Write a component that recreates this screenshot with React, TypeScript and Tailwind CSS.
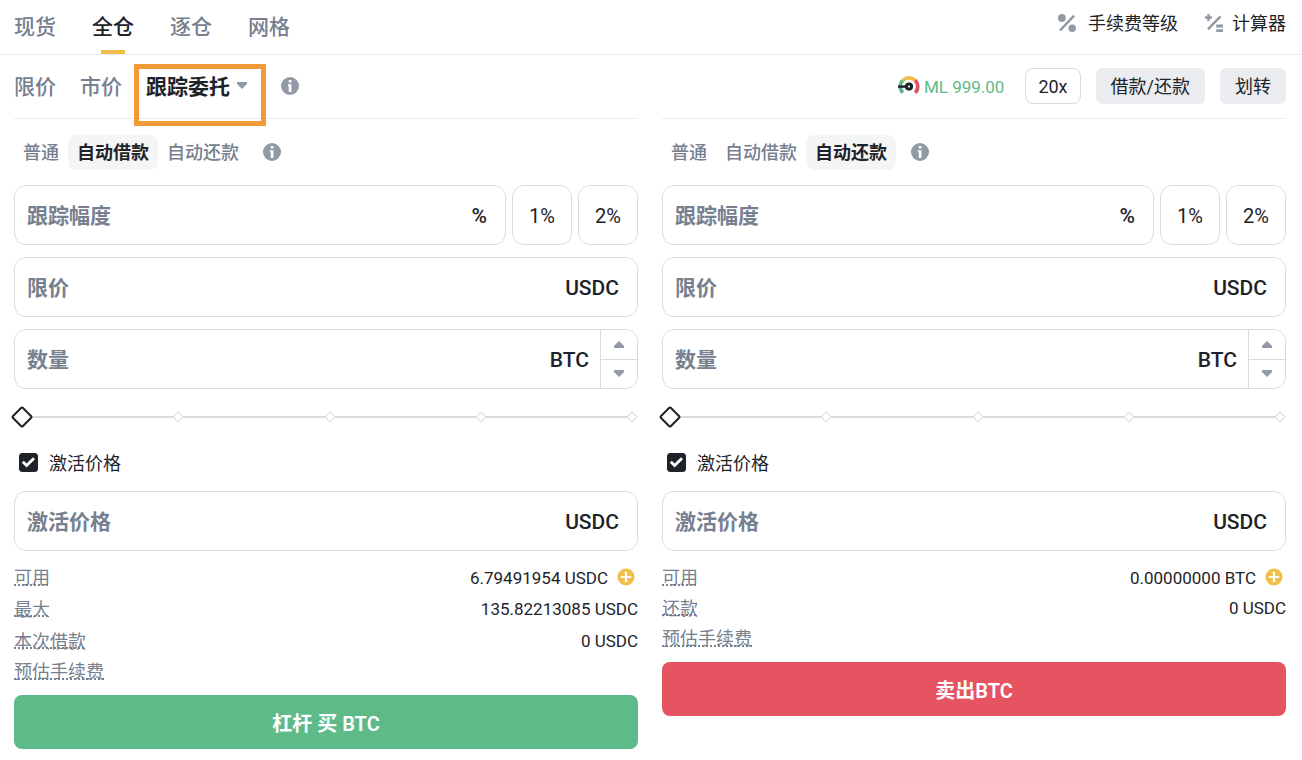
import { useState } from "react";

type Row = { label: string; value?: string; add?: boolean; size: string };

const TABS = ["现货", "全仓", "逐仓", "网格"];
const MODES = ["普通", "自动借款", "自动还款"];

const BUY_ROWS: Row[] = [
  { label: "可用", value: "6.79491954 USDC", add: true, size: "h-[30px]" },
  { label: "最大", value: "135.82213085 USDC", size: "h-[33px]" },
  { label: "本次借款", value: "0 USDC", size: "h-[31px]" },
  { label: "预估手续费", size: "h-[30px]" },
];

const SELL_ROWS: Row[] = [
  { label: "可用", value: "0.00000000 BTC", add: true, size: "h-[30px]" },
  { label: "还款", value: "0 USDC", size: "h-[31px]" },
  { label: "预估手续费", size: "h-[30px]" },
];

const BOX = "h-[60px] rounded-xl border border-[#d8dce1] bg-white";

function InfoIcon() {
  return (
    <svg className="size-[18px] shrink-0" viewBox="0 0 18 18">
      <circle cx="9" cy="9" r="9" fill="#929aa5" />
      <path d="M7.800 3h2.600v2.600H7.800zM7 7.200h3.400V15H7.800V9.200H7z" fill="#fff" />
    </svg>
  );
}

function FeeIcon() {
  return (
    <svg className="size-[18px] shrink-0" viewBox="0 0 18 18" fill="#929aa5">
      <circle cx="3.900" cy="3.900" r="3.900" />
      <circle cx="14.200" cy="14.200" r="3.800" />
      <path d="M15.200 .8l1.800 1.800L3 17.200l-1.800-1.800z" />
    </svg>
  );
}

function CalcIcon() {
  return (
    <svg className="size-[18px] shrink-0" viewBox="0 0 18 18" fill="#929aa5">
      <path d="M2.300 0h2.400v2.300H7v2.400H4.700V7H2.300V4.700H0V2.300h2.300z" />
      <path d="M14.600 1.400l1.800 1.800L3.800 16.200 2 14.400zM11.200 10.600H18v2.800h-6.800zM11.200 15.200H18V18h-6.800z" />
    </svg>
  );
}

function GaugeIcon() {
  return (
    <svg className="h-5 w-[22px] shrink-0" viewBox="0 0 22 20" fill="none" strokeWidth="3.600">
      <path d="M4.800 16.700A8.700 8.700 0 0 1 5 4.300" stroke="#5eba89" />
      <path d="M5 4.300a8.700 8.700 0 0 1 12 0" stroke="#f0bf48" />
      <path d="M17 4.300a8.700 8.700 0 0 1 .2 12.400" stroke="#e0505f" />
      <path d="M0 10.600h8" stroke="#1e2329" strokeWidth="2.400" />
      <circle cx="11" cy="10.600" r="2.600" fill="#fff" stroke="#1e2329" strokeWidth="3" />
    </svg>
  );
}

function Caret({ up }: { up?: boolean }) {
  return (
    <svg className="h-[7px] w-[10px]" viewBox="0 0 10 7" fill="#929aa5">
      <path d={up ? "M5 0l5 5v2H0V5z" : "M5 7l5-5V0H0v2z"} />
    </svg>
  );
}

function Field({ label, unit }: { label: string; unit: string }) {
  return (
    <label className={`${BOX} flex min-w-0 flex-1 items-center pt-[3px] pr-[18px] pl-3 text-[21px] font-medium`}>
      <input
        aria-label={label}
        placeholder={label}
        className="min-w-0 flex-1 outline-none placeholder:font-semibold placeholder:text-[#76808f] placeholder:opacity-100"
      />
      <span>{unit}</span>
    </label>
  );
}

function AmountField() {
  return (
    <div className={`${BOX} flex overflow-hidden`}>
      <label className="flex min-w-0 flex-1 items-center pt-[3px] pr-[11px] pl-3 text-[21px] font-medium">
        <input
          aria-label="数量"
          placeholder="数量"
          className="min-w-0 flex-1 outline-none placeholder:font-semibold placeholder:text-[#76808f] placeholder:opacity-100"
        />
        <span>BTC</span>
      </label>
      <div className="flex w-[37px] flex-col divide-y divide-[#d8dce1] border-l border-[#d8dce1]">
        <button type="button" aria-label="+" className="flex flex-1 items-center justify-center">
          <Caret up />
        </button>
        <button type="button" aria-label="-" className="flex flex-1 items-center justify-center">
          <Caret />
        </button>
      </div>
    </div>
  );
}

function AmountSlider() {
  return (
    <div className="relative mt-[17px] flex h-[22px] items-center">
      <div className="mr-1.5 h-0.5 flex-1 bg-[#d8dce1]" />
      <div className="absolute inset-y-0 right-0.5 left-[9px] flex items-center justify-between">
        {[0, 25, 50, 75, 100].map((n) => (
          <span key={n} className={n === 0 ? "size-2" : "size-2 rotate-45 rounded-[1px] border border-[#d8dce1] bg-white"} />
        ))}
      </div>
      <input
        type="range"
        aria-label="%"
        defaultValue={0}
        className="absolute inset-0 w-full appearance-none bg-transparent [&::-webkit-slider-thumb]:size-4 [&::-webkit-slider-thumb]:rotate-45 [&::-webkit-slider-thumb]:appearance-none [&::-webkit-slider-thumb]:rounded-[2px] [&::-webkit-slider-thumb]:border-2 [&::-webkit-slider-thumb]:border-[#1e2329] [&::-webkit-slider-thumb]:bg-white"
      />
    </div>
  );
}

function OrderForm({ side, initialMode, rows }: { side: "buy" | "sell"; initialMode: string; rows: Row[] }) {
  const [mode, setMode] = useState(initialMode);
  const [trigger, setTrigger] = useState(true);

  return (
    <form className="flex min-w-0 flex-1 flex-col border-t border-[#eaecef] pt-4" onSubmit={(e) => e.preventDefault()}>
      <div className="flex items-center">
        {MODES.map((m) => (
          <button
            key={m}
            type="button"
            onClick={() => setMode(m)}
            className={`h-[35px] rounded-lg px-[9px] text-lg ${m === mode ? "bg-[#f4f6f6] font-semibold" : "font-medium text-[#76808f]"}`}
          >
            {m}
          </button>
        ))}
        <span className="ml-[15px] pb-px">
          <InfoIcon />
        </span>
      </div>

      <div className="mt-[15px] flex flex-col gap-3">
        <div className="flex gap-1.5">
          <Field label="跟踪幅度" unit="%" />
          <button type="button" className={`${BOX} w-[60px] pt-0.5 text-xl`}>1%</button>
          <button type="button" className={`${BOX} w-[60px] pt-0.5 text-xl`}>2%</button>
        </div>
        <div className="flex">
          <Field label="限价" unit="USDC" />
        </div>
        <AmountField />
      </div>

      <AmountSlider />

      <label className="mt-[21px] mb-4 flex h-[26px] items-center gap-[11px] pl-[5px] text-lg">
        <span className="relative flex size-[19px]">
          <input
            type="checkbox"
            checked={trigger}
            onChange={(e) => setTrigger(e.target.checked)}
            className="peer size-[19px] appearance-none rounded-[3px] border border-[#1e2329] checked:bg-[#1e2329]"
          />
          <svg
            className="pointer-events-none absolute inset-0 hidden peer-checked:block"
            viewBox="0 0 19 19" fill="none" stroke="#fff" strokeWidth="2.800"
          >
            <path d="M3.800 8.800l3.800 3.700 7.400-7.300" />
          </svg>
        </span>
        <span className="pt-1">激活价格</span>
      </label>

      <div className="flex">
        <Field label="激活价格" unit="USDC" />
      </div>

      <dl className="mt-3 mb-2 text-lg">
        {rows.map((r) => (
          <div key={r.label} className={`flex items-center justify-between ${r.size}`}>
            <dt className="text-[#76808f] underline decoration-dotted decoration-2 underline-offset-0 [text-decoration-skip-ink:none]">
              {r.label}
            </dt>
            <dd className="flex items-center text-[17px]">
              {r.value}
              {r.add && (
                <button type="button" aria-label="+" className="mr-[3px] ml-[9px] pb-0.5">
                  <svg className="size-[18px]" viewBox="0 0 18 18">
                    <circle cx="9" cy="9" r="8.500" fill="#f0bf48" />
                    <path d="M9 3.800v10.400M3.800 9h10.400" stroke="#fff" strokeWidth="2.200" />
                  </svg>
                </button>
              )}
            </dd>
          </div>
        ))}
      </dl>

      <button
        type="submit"
        className={`h-[54px] rounded-lg pt-[3px] text-xl font-semibold text-white ${side === "buy" ? "bg-[#5eba89]" : "bg-[#e65462]"}`}
      >
        {side === "buy" ? "杠杆 买 BTC" : "卖出BTC"}
      </button>
    </form>
  );
}

export default function App() {
  const [tab, setTab] = useState("全仓");

  return (
    <main className="min-h-screen bg-white font-[Roboto,'Noto_Sans_CJK_SC',sans-serif] text-[#1e2329]">
      <header className="flex h-[55px] justify-between border-b border-[#eaecef] pr-4 pl-3.5">
        <nav className="flex gap-9">
          {TABS.map((t) => (
            <button
              key={t}
              type="button"
              onClick={() => setTab(t)}
              className={`relative pt-0.5 text-[21px] font-medium ${t === tab ? "" : "text-[#76808f]"}`}
            >
              {t}
              {t === tab && <span className="absolute inset-x-[9px] bottom-0 h-1 bg-[#f0bf48]" />}
            </button>
          ))}
        </nav>
        <div className="flex items-center gap-[27px] pb-2 text-lg">
          <a href="#fees" className="flex items-center gap-3">
            <FeeIcon />
            <span className="pt-0.5">手续费等级</span>
          </a>
          <a href="#calculator" className="flex items-center gap-[9px]">
            <CalcIcon />
            <span className="pt-0.5">计算器</span>
          </a>
        </div>
      </header>

      <div className="flex h-[63px] items-center justify-between pr-4 pb-0.5 pl-3.5">
        <div className="flex items-center gap-6 text-[21px] font-medium">
          <button type="button" className="pt-1 text-[#76808f]">限价</button>
          <button type="button" className="pt-1 text-[#76808f]">市价</button>
          <div className="relative flex items-center">
            <select aria-label="跟踪委托" className="w-[102px] appearance-none pt-1 font-semibold outline-none">
              <option>跟踪委托</option>
            </select>
            <span className="pointer-events-none absolute right-px">
              <Caret />
            </span>
            <span className="pointer-events-none absolute -top-1 -right-[18px] -left-3 z-10 h-[62px] border-[5px] border-[#f29a38]" />
          </div>
          <span className="ml-[9px]">
            <InfoIcon />
          </span>
        </div>
        <div className="flex items-center gap-[15px] text-lg">
          <span className="mr-1.5 flex items-center gap-1 text-lg text-[#5eba89]">
            <GaugeIcon />
            <span className="pt-1 text-[17px]">ML 999.00</span>
          </span>
          <button type="button" className="h-9 rounded-lg border border-[#d8dce1] px-3 pt-0.5">20x</button>
          <button type="button" className="h-9 rounded-md bg-[#eaecef] px-[15px] pt-[3px]">借款/还款</button>
          <button type="button" className="h-9 rounded-md bg-[#eaecef] px-[15px] pt-[3px]">划转</button>
        </div>
      </div>

      <div className="flex items-start gap-6 pr-4 pl-3.5">
        <OrderForm side="buy" initialMode="自动借款" rows={BUY_ROWS} />
        <OrderForm side="sell" initialMode="自动还款" rows={SELL_ROWS} />
      </div>
    </main>
  );
}
